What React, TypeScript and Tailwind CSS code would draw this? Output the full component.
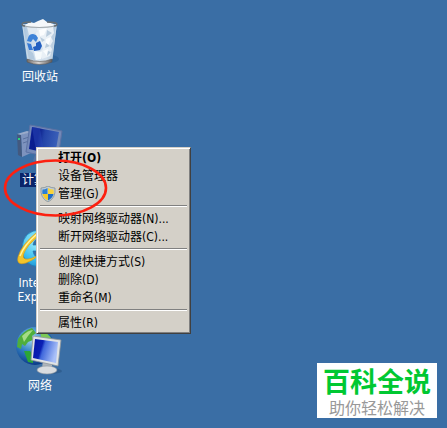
import { Fragment } from 'react';
import type { ReactNode } from 'react';

interface DesktopItem {
    id: string;
    label: string;
    icon: ReactNode;
    selected?: boolean;
}

interface MenuEntry {
    label: string;
    hotkey?: string;
    bold?: boolean;
    shield?: boolean;
}

const MENU_GROUPS: MenuEntry[][] = [
    [
        { label: '打开', hotkey: '(O)', bold: true },
        { label: '设备管理器' },
        { label: '管理', hotkey: '(G)', shield: true },
    ],
    [
        { label: '映射网络驱动器', hotkey: '(N)...' },
        { label: '断开网络驱动器', hotkey: '(C)...' },
    ],
    [
        { label: '创建快捷方式', hotkey: '(S)' },
        { label: '删除', hotkey: '(D)' },
        { label: '重命名', hotkey: '(M)' },
    ],
    [{ label: '属性', hotkey: '(R)' }],
];

function RecycleBinIcon() {
    return (
        <svg viewBox="0 0 48 48" className="size-12" aria-hidden="true">
            <defs>
                <linearGradient id="binGlass" x1="0" x2="1">
                    <stop offset="0" stopColor="#9fbdd9" />
                    <stop offset="0.3" stopColor="#cfdeec" />
                    <stop offset="0.7" stopColor="#d3e0ec" />
                    <stop offset="1" stopColor="#a9c2da" />
                </linearGradient>
                <linearGradient id="binBase" x1="0" x2="1">
                    <stop offset="0" stopColor="#6e6a68" />
                    <stop offset="0.45" stopColor="#d9d4d0" />
                    <stop offset="1" stopColor="#5d5d60" />
                </linearGradient>
            </defs>
            <ellipse cx="34" cy="41" rx="9" ry="4" fill="#1f548c" opacity="0.4" />
            <path d="M6 6 L11 42 Q24 49 36 42 L41 6 Z" fill="url(#binGlass)" />
            <path d="M9 7 L14 4 L18 5 L22 3 L27 1 L31 4 L38 6 L36 9 L12 9 Z" fill="#f4f7fa" />
            <path d="M21 10 L37 8 L38 15 L35 19 L37 23 L34 28 L36 31 L34 38 L26 41 L23 35 L27 31 L25 24 L19 18 Z" fill="#e9f0f6" />
            <path d="M23 12 L31 10 L28 17 L24 18 Z M30 21 L35 19 L33 26 L29 28 Z M27 33 L32 31 L31 38 Z" fill="#fbfdfe" />
            <path d="M31 12 l5 3 -6 4z M30 25 l4 3 -5 2z M32 33 l3 1 -4 4z M24 19 l5 3 -3 2z" fill="#b8cbdc" />
            <path d="M11 31 L17 35 L19 42 L13 41 Z" fill="#b3c9de" />
            <path d="M18 33 L26 34 L25 41 L20 42 Z" fill="#f6fafc" />
            <path d="M11 9 L20 9 L22 14 L13 17 Z" fill="#dfe9f2" />
            <path d="M12 20 Q13 16 17 16 L20 17 L22 20 L20 24 L17 21 L15 24 L11 23 Z" fill="#3c82d8" />
            <path d="M20 25 L24 23 L26 28 L24 32 L18 33 L17 29 L20 28 Z" fill="#225fc1" />
            <path d="M11 25 L15 26 L17 32 L13 32 Z" fill="#3679d4" />
            <path d="M11 41 Q24 46 36 41 L36 44 Q24 49 11 44 Z" fill="url(#binBase)" stroke="#5b5755" strokeWidth="0.6" />
            <path d="M7 8 Q23 11 40 8" fill="none" stroke="#a3abb0" strokeWidth="1.2" />
            <path d="M6 6 Q7 4 15 4 M31 4 Q40 4 41 6 Q41 8 38 8 M6 6 Q6 8 9 8" fill="none" stroke="#676e72" strokeWidth="1.4" />
            <path d="M7 9 L12 41 M40 9 L36 41" stroke="#cfdeea" strokeWidth="0.8" />
        </svg>
    );
}

function ComputerIcon() {
    return (
        <svg viewBox="0 0 48 48" className="size-12" aria-hidden="true">
            <defs>
                <linearGradient id="pcScreen" x1="0" y1="0" x2="1" y2="0.2">
                    <stop offset="0" stopColor="#0a1f96" />
                    <stop offset="0.35" stopColor="#0a1d8c" />
                    <stop offset="0.55" stopColor="#2344a8" />
                    <stop offset="1" stopColor="#3a5fb8" />
                </linearGradient>
            </defs>
            <path d="M5 14 L15 10 L15 32 L6 36 Z" fill="#7d93be" />
            <path d="M1 13 L5 14 L6 36 L2 34 Z" fill="#43597f" />
            <path d="M1 13 L11 10 L15 11 L5 14 Z" fill="#9aabca" />
            <path d="M7 18 L13 16 M7 22 L13 20" stroke="#5a719f" strokeWidth="1" />
            <rect x="2" y="17" width="2" height="2" fill="#2fd07a" />
            <path d="M14 4 L46 10 L42 38 L10 31 Z" fill="#7389b8" stroke="#5c72a4" />
            <path d="M16 6 L43 11 L39 34 L13 28 Z" fill="url(#pcScreen)" />
            <path d="M16 6 L24 7 L28 31 L20 30 Z" fill="#2a48b8" opacity="0.5" />
            <path d="M19 34 L29 36 L32 42 L17 40 Z" fill="#5874a3" />
        </svg>
    );
}

function ExplorerIcon() {
    return (
        <svg viewBox="0 0 48 48" className="size-12" aria-hidden="true">
            <defs>
                <radialGradient id="ieBlue" cx="0.4" cy="0.3" r="0.8">
                    <stop offset="0" stopColor="#a5effc" />
                    <stop offset="0.6" stopColor="#3cbfee" />
                    <stop offset="1" stopColor="#1483c9" />
                </radialGradient>
            </defs>
            <path
                d="M42 27 H17 Q18 34 25 35 Q30 35 33 31 H41 Q37 43 24 43 Q6 42 6 24 Q7 6 25 6 Q43 7 42 27 Z M17 21 H33 Q31 14 25 14 Q18 14 17 21 Z"
                fill="url(#ieBlue)"
                fillRule="evenodd"
                stroke="#1978b6"
                strokeWidth="0.7"
            />
            <path d="M44 4 Q36 -3 21 8 Q5 21 2 33 Q0 42 10 39 Q18 36 24 30 Q15 36 9 35 Q4 33 13 21 Q26 6 44 4 Z" fill="#f4c52a" stroke="#d79a10" strokeWidth="0.6" />
            <path d="M4 32 Q8 21 21 10" stroke="#fff6a2" strokeWidth="1.5" fill="none" />
        </svg>
    );
}

function NetworkIcon() {
    return (
        <svg viewBox="0 0 48 48" className="size-12" aria-hidden="true">
            <defs>
                <radialGradient id="globe" cx="0.4" cy="0.3" r="0.7">
                    <stop offset="0" stopColor="#a6d9f3" />
                    <stop offset="0.5" stopColor="#3483c6" />
                    <stop offset="1" stopColor="#0b3b88" />
                </radialGradient>
                <linearGradient id="netScreen" x1="0" y1="0" x2="1" y2="0.3">
                    <stop offset="0" stopColor="#0414a8" />
                    <stop offset="0.4" stopColor="#0a20b4" />
                    <stop offset="0.5" stopColor="#4068dc" />
                    <stop offset="1" stopColor="#a9c0f8" />
                </linearGradient>
            </defs>
            <circle cx="19" cy="19" r="19" fill="url(#globe)" />
            <path d="M2 12 Q7 4 16 1 L20 6 L16 9 L17 13 L12 15 L9 19 L6 17 L5 22 L1 20 Z" fill="#4fae3c" />
            <path d="M24 3 Q33 6 37 14 L29 14 L25 10 Z" fill="#7bc957" />
            <path d="M8 24 L14 24 L17 28 L17 36 L12 35 Z" fill="#2ba637" />
            <path d="M6 9 Q12 3 17 3 L12 9 L8 15 Z" fill="#a5dc86" />
            <ellipse cx="34" cy="44" rx="12" ry="3" fill="#244d7b" opacity="0.5" />
            <path d="M27 34 L36 36 L36 41 L26 41 Z" fill="#aeb5bc" />
            <ellipse cx="31" cy="43" rx="10" ry="4" fill="#d9dcdf" stroke="#8d969e" strokeWidth="0.6" />
            <path d="M17 9 L45 13 L42 39 L15 33 Z" fill="#e0e3e5" stroke="#8d9499" strokeWidth="0.8" />
            <path d="M19 12 L42 15 L40 36 L17 31 Z" fill="url(#netScreen)" />
        </svg>
    );
}

function ShieldIcon() {
    return (
        <svg viewBox="0 0 16 16" className="size-4" aria-hidden="true">
            <path d="M8 0 Q11 2 15 2 Q16 12 8 16 Q0 12 1 2 Q5 2 8 0 Z" fill="#c3ced6" stroke="#79858c" strokeWidth="0.7" />
            <path d="M7.5 2 V8 H2.5 Q2 6 2.5 3.5 Q5 3.5 7.5 2 Z" fill="#2c7fd3" />
            <path d="M8 2 Q11 3.5 13.5 3.5 Q14 6 13.5 8 H8 Z" fill="#f8d33b" />
            <path d="M2.5 8 H8 V14.5 Q3.5 12 2.5 8 Z" fill="#f5c928" />
            <path d="M8 8 H13.5 Q12.5 12 8 14.5 Z" fill="#1f6cc7" />
        </svg>
    );
}

const DESKTOP_ITEMS: DesktopItem[] = [
    { id: 'recycle', label: '回收站', icon: <RecycleBinIcon /> },
    { id: 'computer', label: '计算机', icon: <ComputerIcon />, selected: true },
    { id: 'explorer', label: 'Internet Explorer', icon: <ExplorerIcon /> },
    { id: 'network', label: '网络', icon: <NetworkIcon /> },
];

function DesktopIcons() {
    return (
        <div className="flex w-20 flex-col pt-[18px]">
            {DESKTOP_ITEMS.map((item) => (
                <button
                    key={item.id}
                    type="button"
                    className="flex h-[103px] flex-col items-center gap-1 text-white last:h-auto"
                >
                    {item.icon}
                    <span
                        className={`px-0.5 text-center text-[12px] leading-[14px] ${item.selected ? 'bg-[#0a246a]' : ''}`}
                    >
                        {item.label}
                    </span>
                </button>
            ))}
        </div>
    );
}

function ContextMenu() {
    return (
        <div
            role="menu"
            className="absolute left-9 top-[147px] w-[155px] border border-t-[#d4d0c8] border-l-[#d4d0c8] border-r-[#404040] border-b-[#404040] bg-[#d4d0c8] p-px text-[12px] text-black shadow-[inset_1px_1px_0_#ffffff,inset_-1px_-1px_0_#808080]"
        >
            {MENU_GROUPS.map((group, index) => (
                <Fragment key={group[0].label}>
                    {index > 0 && (
                        <div role="separator" className="mx-0.5 mt-0.5 mb-[3px] h-0.5 border-t border-b border-t-[#808080] border-b-white" />
                    )}
                    {group.map((entry) => (
                        <button
                            key={entry.label}
                            type="button"
                            role="menuitem"
                            className={`flex h-[18px] w-full items-center whitespace-nowrap text-left ${entry.bold ? 'font-bold' : ''}`}
                        >
                            <span className="flex w-5 justify-end pr-0.5">{entry.shield && <ShieldIcon />}</span>
                            {entry.label}
                            {entry.hotkey}
                        </button>
                    ))}
                </Fragment>
            ))}
        </div>
    );
}

export default function App() {
    return (
        <main className="relative min-h-screen overflow-hidden bg-[#3a6ea5] font-['DejaVu_Sans_Condensed','Noto_Sans_CJK_SC',sans-serif]">
            <DesktopIcons />
            <ContextMenu />
            <svg
                viewBox="0 0 106 60"
                className="pointer-events-none absolute left-[3px] top-[158px] w-[106px]"
                aria-hidden="true"
            >
                <ellipse cx="52.5" cy="30" rx="50.5" ry="27.5" fill="none" stroke="#fc2010" strokeWidth="2.6" />
            </svg>
            <div className="absolute bottom-2.5 right-2.5 flex h-[55px] w-[120px] flex-col items-center bg-white pt-0.5 font-['Noto_Sans_CJK_SC',sans-serif]">
                <span className="text-[27px] font-bold leading-8 text-[#00c832]">百科全说</span>
                <span className="text-[16px] leading-5 text-[#999999]">助你轻松解决</span>
            </div>
        </main>
    );
}
